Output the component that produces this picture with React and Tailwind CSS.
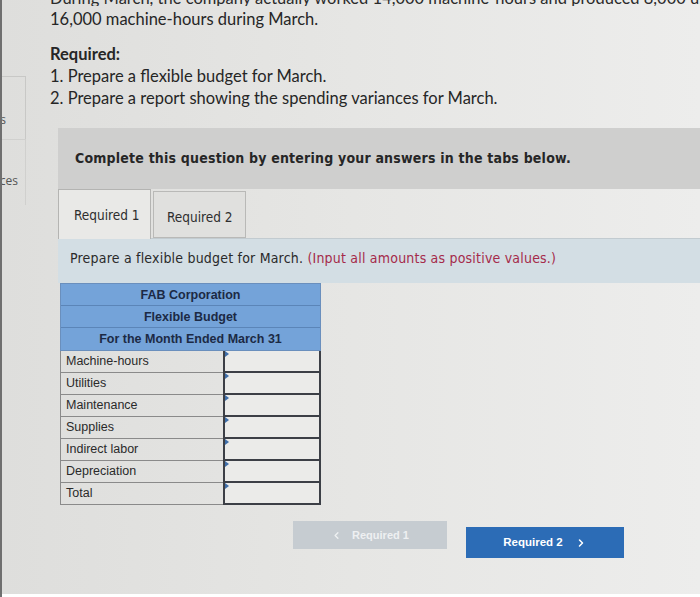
import { ChevronLeft, ChevronRight } from "lucide-react";

const rows = [
  "Machine-hours",
  "Utilities",
  "Maintenance",
  "Supplies",
  "Indirect labor",
  "Depreciation",
  "Total",
];

const lato = { fontFamily: "Lato, 'Open Sans', sans-serif" };
const verd = { fontFamily: "'DejaVu Sans Condensed', 'DejaVu Sans', 'Liberation Sans', sans-serif" };
const arial = { fontFamily: "'Liberation Sans', Arial, sans-serif" };

function Sidebar() {
  return (
    <div className="w-[24px] shrink-0 text-[12px] text-[#555]" style={{ fontFamily: "'Open Sans', sans-serif" }}>
      <div className="h-[76px]" />
      <div className="flex h-[63px] justify-end overflow-hidden whitespace-nowrap border-r border-t border-[#c8c8c6] pr-[19px] pt-[34px]">
        <span>Hints</span>
      </div>
      <div className="flex h-[66px] justify-end overflow-hidden whitespace-nowrap border-r border-t border-[#d0d0ce] pr-[7px] pt-[32px]">
        <span>References</span>
      </div>
    </div>
  );
}

function BudgetTable() {
  return (
    <div className="ml-[34px] w-[261px]" style={arial}>
      <div className="border border-[#6a8fbd] bg-[#74a3d9] text-center text-[12.5px] font-bold text-[#1c2a45]">
        <div className="h-[22px] border-b border-[#5b85b8] leading-[22px]">FAB Corporation</div>
        <div className="h-[22px] border-b border-[#5b85b8] leading-[22px]">Flexible Budget</div>
        <div className="h-[22px] leading-[22px]">For the Month Ended March 31</div>
      </div>
      {rows.map((r) => (
        <div key={r} className="grid h-[22px] grid-cols-[163px_1fr]">
          <div className="border-b border-l border-[#8a8a8a] pl-[5px] text-[12.5px] leading-[21px] text-[#2a2a2a]">
            {r}
          </div>
          <div className="relative border-x-2 border-b-2 border-[#3c3f46] bg-[#ebebe9]">
            <span className="absolute left-0 top-0 h-0 w-0 border-l-[4px] border-t-[3px] border-b-[3px] border-l-[#3f6ea8] border-t-transparent border-b-transparent" />
          </div>
        </div>
      ))}
    </div>
  );
}

export default function App() {
  return (
    <div className="h-[597px] w-[700px] overflow-hidden border-l-2 border-[#6f6f6f] bg-gradient-to-r from-[#dededc] via-[#e6e6e4] to-[#ededec]">
      <div className="flex h-[594px]">
        <Sidebar />
        <div className="min-w-0 flex-1">
          <div className="h-[6px] overflow-hidden whitespace-nowrap pl-[24px]" style={lato}>
            <div className="-mt-[13px] text-[16.5px] leading-[22px] text-[#2b2b2b]">
              During March, the company actually worked 14,000 machine-hours and produced 8,000 units. The
            </div>
          </div>
          <div className="pl-[24px] pt-[2px] text-[16.5px] leading-[22px] text-[#262626]" style={lato}>
            <p>16,000 machine-hours during March.</p>
            <p className="mt-[13px] font-bold">Required:</p>
            <p>1. Prepare a flexible budget for March.</p>
            <p>2. Prepare a report showing the spending variances for March.</p>
          </div>

          <div className="ml-[32px] mt-[19px] h-[61px] bg-[#cfcfce] pl-[17px] pt-[20px]" style={verd}>
            <p className="text-[14px] font-bold tracking-[0.2px] text-[#262626]">
              Complete this question by entering your answers in the tabs below.
            </p>
          </div>

          <div className="ml-[32px] flex h-[49px] items-start gap-[2px] text-[13.5px] text-[#2e2e2e]" style={verd}>
            <div className="h-[50px] w-[93px] border border-b-0 border-[#b4b4b2] bg-[#e9e9e7] pl-[15px] pt-[15px]">
              Required 1
            </div>
            <div className="mt-[2px] h-[47px] w-[93px] border border-[#b9b9b7] bg-[#e0e0de] pl-[13px] pt-[15px]">
              Required 2
            </div>
          </div>

          <div className="ml-[32px] h-[45px] border-t border-[#c2cbd0] bg-[#d3dee4] pl-[12px] pt-[9px]" style={verd}>
            <p className="text-[14px] tracking-[0.2px] text-[#2a2a2a]">
              Prepare a flexible budget for March.{" "}
              <span className="text-[#a52a4a]">(Input all amounts as positive values.)</span>
            </p>
          </div>

          <BudgetTable />

          <div className="ml-[267px] mt-[16px] flex items-start gap-[19px] font-bold" style={arial}>
            <div className="flex h-[28px] w-[154px] items-center justify-center gap-[10px] bg-[#c6ccd1] text-[#eef0f2]">
              <ChevronLeft size={11} strokeWidth={3} />
              <span className="text-[11px]">Required 1</span>
            </div>
            <div className="mt-[6px] flex h-[31px] w-[158px] items-center justify-center gap-[12px] bg-[#2c6cb6] text-white">
              <span className="text-[11.5px]">Required 2</span>
              <ChevronRight size={12} strokeWidth={3} />
            </div>
          </div>
        </div>
      </div>
      <div className="h-[3px] bg-white" />
    </div>
  );
}
